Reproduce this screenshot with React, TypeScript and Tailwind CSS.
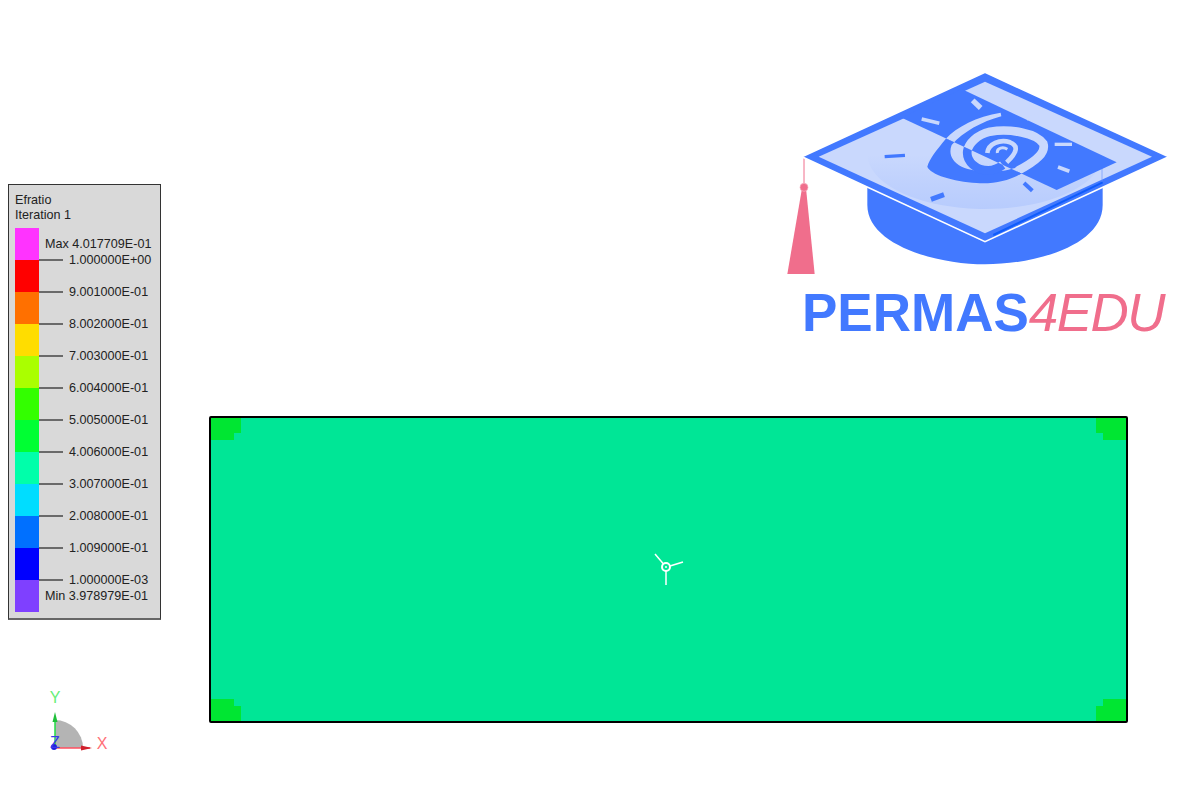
import React from "react";

const swatches = [
  "bg-[#ff33ff]",
  "bg-[#ff0000]",
  "bg-[#ff7000]",
  "bg-[#ffdd00]",
  "bg-[#aaff00]",
  "bg-[#33ff00]",
  "bg-[#00ff33]",
  "bg-[#00ffaa]",
  "bg-[#00ddff]",
  "bg-[#0070ff]",
  "bg-[#0000ff]",
  "bg-[#7f40ff]",
];

const ticks = [
  "1.000000E+00",
  "9.001000E-01",
  "8.002000E-01",
  "7.003000E-01",
  "6.004000E-01",
  "5.005000E-01",
  "4.006000E-01",
  "3.007000E-01",
  "2.008000E-01",
  "1.009000E-01",
  "1.000000E-03",
];

const BLUE = "#4279ff";
const LIGHT = "#c9d8fd";
const PINK = "#f06e8c";

// same drawing twice: colours swap on each side of the band
const Swirl = ({ a }: { a: string }) => (
  <g>
    <path
      d="M662,143 C590,155 530,185 497,222 C470,255 448,282 442,305 C450,328 520,350 590,354 C650,358 700,342 730,322 L715,305 C670,325 590,325 545,305 C515,290 505,265 515,240 C550,200 605,170 664,154 Z"
      fill={a}
    />
    <g fill="none" stroke={a} strokeLinecap="butt">
      <path
        d="M712,318 C770,288 798,262 790,236 C770,204 690,190 630,200 C590,210 566,235 562,258 C558,290 590,316 625,316 C640,316 655,310 668,300"
        strokeWidth="26"
      />
      <path d="M622,264 C625,236 660,222 690,232 C716,242 712,262 680,292" strokeWidth="14" />
      <path d="M652,264 C650,248 670,245 682,253" strokeWidth="9" />
    </g>
  </g>
);

const Logo = () => (
  <svg viewBox="0 0 1200 645" className="block w-[400px] h-[215px]">
    <defs>
      <clipPath id="band">
        <polygon points="365,158 545,72 1010,292 830,375" />
      </clipPath>
      <clipPath id="off-band">
        <path d="M0,0 H1200 V645 H0 Z M365,158 L830,375 L1010,292 L545,72 Z" clipRule="evenodd" />
      </clipPath>
      <clipPath id="board">
        <polygon points="615,50 1116,275 615,505 116,275" />
      </clipPath>
      <linearGradient id="base-shade" x1="0" y1="0" x2="0" y2="1">
        <stop offset="0" stopColor="#4279ff" stopOpacity="0" />
        <stop offset="0.5" stopColor="#4279ff" stopOpacity="0.07" />
        <stop offset="1" stopColor="#4279ff" stopOpacity="0.13" />
      </linearGradient>
    </defs>

    {/* tassel */}
    <line x1="72" y1="280" x2="72" y2="360" stroke={PINK} strokeWidth="3" />
    <polygon points="66,370 78,370 104,627 22,627" fill={PINK} />
    <circle cx="72" cy="367" r="12" fill={PINK} stroke="#f7b4c4" strokeWidth="2" />

    {/* cap base */}
    <path
      d="M262,360 V420 C262,540 470,598 615,598 C770,598 968,540 968,420 V360 L615,525 Z"
      fill={BLUE}
    />

    {/* board */}
    <polygon
      points="615,22 1166,275 615,530 66,275"
      fill={BLUE}
      stroke="#ffffff"
      strokeWidth="5"
      strokeLinejoin="miter"
    />
    <polygon points="615,50 1116,275 615,505 116,275" fill={LIGHT} />
    <g clipPath="url(#board)">
      <path d="M262,270 C270,370 440,432 615,432 C790,432 960,370 968,270 Z" fill="url(#base-shade)" />
    </g>
    <line x1="968" y1="352" x2="640" y2="510" stroke="#0f5cfb" strokeWidth="6" />
    <line x1="966" y1="285" x2="966" y2="350" stroke="#6b96ff" strokeWidth="2" />

    <polygon points="365,158 545,72 1010,292 830,375" fill={BLUE} />
    <g clipPath="url(#band)">
      <Swirl a={LIGHT} />
    </g>
    <g clipPath="url(#off-band)">
      <Swirl a={BLUE} />
    </g>

    {/* little ticks round the swirl */}
    <g strokeLinecap="butt">
      <line x1="578" y1="106" x2="602" y2="129" stroke={LIGHT} strokeWidth="16" />
      <line x1="425" y1="162" x2="478" y2="175" stroke={LIGHT} strokeWidth="11" />
      <line x1="740" y1="161" x2="774" y2="151" stroke={LIGHT} strokeWidth="11" />
      <line x1="824" y1="238" x2="876" y2="238" stroke={LIGHT} strokeWidth="10" />
      <line x1="834" y1="306" x2="868" y2="319" stroke={LIGHT} strokeWidth="11" />
      <line x1="732" y1="354" x2="757" y2="377" stroke={BLUE} strokeWidth="12" />
      <line x1="453" y1="403" x2="492" y2="389" stroke={BLUE} strokeWidth="15" />
      <line x1="314" y1="275" x2="375" y2="271" stroke={BLUE} strokeWidth="10" />
    </g>
  </svg>
);

const Triad = () => (
  <svg viewBox="0 0 110 80" className="block w-[110px] h-[80px]">
    <path d="M55,68 V40 A28,28 0 0 1 83,68 Z" fill="#b4b4b4" />
    <line x1="55" y1="68" x2="55" y2="36" stroke="#22dd44" strokeWidth="1.5" />
    <polygon points="55,32 52.5,42 57.5,42" fill="#1fbf3a" />
    <line x1="55" y1="68" x2="90" y2="68" stroke="#ff5060" strokeWidth="1.5" />
    <polygon points="92,68 81,65.5 81,70.5" fill="#d0202c" />
    <circle cx="54" cy="67" r="3" fill="#1f1fe0" />
    <text x="55" y="17" dy="0.35em" textAnchor="middle" fontSize="16" fill="#66ee77" fontFamily="Liberation Sans, sans-serif">
      Y
    </text>
    <text x="102" y="63" dy="0.35em" textAnchor="middle" fontSize="16" fill="#ff7078" fontFamily="Liberation Sans, sans-serif">
      X
    </text>
    <text x="55" y="62" dy="0.35em" textAnchor="middle" fontSize="16" fill="#3a3ae8" fontFamily="Liberation Sans, sans-serif">
      Z
    </text>
  </svg>
);

const Corner = ({ className }: { className: string }) => (
  <div className={`absolute flex flex-col ${className}`}>
    <div className="w-[30px] h-[15px] bg-[#00e632]" />
    <div className="w-[23px] h-[7px] bg-[#00e632]" />
  </div>
);

const App = () => {
  return (
    <div className="flex w-[1200px] h-[800px] overflow-hidden bg-white font-['Liberation_Sans',sans-serif]">
      <div className="w-[209px] shrink-0 pl-2 pt-[184px]">
        <div className="w-[153px] h-[436px] border border-[#333333] border-b-2 border-b-[#666666] bg-[#d9d9d9] pl-[6px] pt-[8px] text-[12.6px] text-[#222222]">
          <div className="leading-[15px]">Efratio</div>
          <div className="leading-[15px]">Iteration 1</div>
          <div className="flex mt-[5px]">
            <div className="flex flex-col w-6">
              {swatches.map((c) => (
                <div key={c} className={`h-8 ${c}`} />
              ))}
            </div>
            <div className="flex flex-col pt-2 whitespace-nowrap">
              <div className="h-4 -mb-2 pl-[6px] leading-4">Max 4.017709E-01</div>
              {ticks.map((t) => (
                <div key={t} className="flex items-center h-8">
                  <div className="w-6 h-[2px] -mt-[1px] bg-[#6a6a6a] mr-[6px]" />
                  <span className="leading-4">{t}</span>
                </div>
              ))}
              <div className="h-4 -mt-2 pl-[6px] leading-4">Min 3.978979E-01</div>
            </div>
          </div>
        </div>
        <div className="-ml-2 mt-[60px]">
          <Triad />
        </div>
      </div>

      <div className="flex flex-col flex-1">
        <div className="pl-[571px] pt-[65px] h-[416px]">
          <Logo />
          <div className="mt-[6px] pl-[22px] whitespace-nowrap leading-[53px] text-[53px] font-bold text-[#4279ff]">
            PERMAS
            <span className="font-normal italic text-[#f06e8c] tracking-[-1.5px]">4EDU</span>
          </div>
        </div>
        <div className="relative w-[919px] h-[307px] border-2 border-black rounded-[2px] bg-[#00e696]">
          <Corner className="left-0 top-0" />
          <Corner className="right-0 top-0 -scale-x-100" />
          <Corner className="left-0 bottom-0 -scale-y-100" />
          <Corner className="right-0 bottom-0 -scale-100" />
          {/* centre marker */}
          <svg viewBox="0 0 32 36" className="absolute left-[442px] top-[134px] w-8 h-9">
            <g stroke="#ffffff" fill="none">
              <circle cx="13" cy="15" r="4" strokeWidth="2" />
              <circle cx="13" cy="15" r="1" fill="#ffffff" strokeWidth="0" />
              <line x1="10.5" y1="12" x2="2" y2="2" strokeWidth="1.5" />
              <line x1="17" y1="14" x2="30" y2="10" strokeWidth="1.5" />
              <line x1="13" y1="19" x2="13" y2="33" strokeWidth="1.5" />
            </g>
          </svg>
        </div>
      </div>
    </div>
  );
};

export default App;
